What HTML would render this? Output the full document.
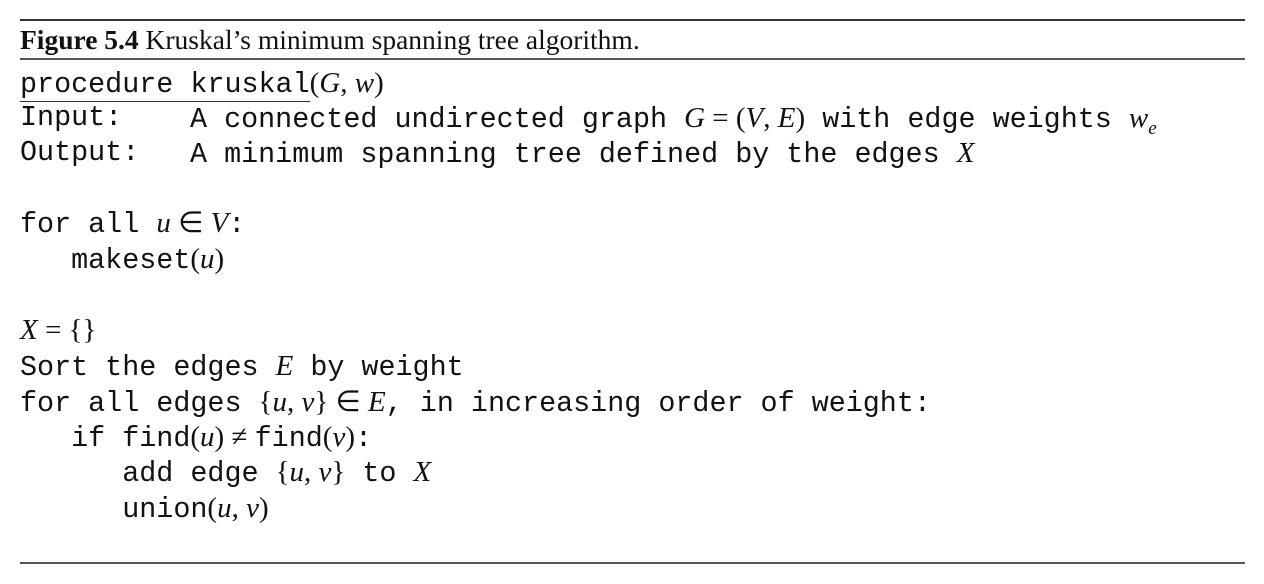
<!DOCTYPE html>
<html><head><meta charset="utf-8"><style>
body{margin:0;width:1264px;height:584px;background:#fff;position:relative;overflow:hidden;color:#111}
.r{position:absolute;left:20px;width:1225px;background:#333}
.l{position:absolute;left:20px;height:36px;line-height:36px;white-space:pre;font-family:"Liberation Mono",monospace;font-size:28.4px}
.m{font-family:"Liberation Serif",serif;font-style:italic;font-size:29px}
.n{font-family:"Liberation Serif",serif;font-size:29px}
.c{position:absolute;left:20px;top:22px;font-family:"Liberation Serif",serif;font-size:27.5px;line-height:36px}
.t{position:absolute;left:170px}
</style></head><body>
<div class="r" style="top:19px;height:2px"></div>
<div class="c"><b>Figure 5.4</b> Kruskal’s minimum spanning tree algorithm.</div>
<div class="r" style="top:58px;height:1.5px;background:#555"></div>
<div class="l" style="top:65px"><span style="border-bottom:1.5px solid #333;padding-bottom:0">procedure kruskal</span><span class="n">(</span><span class="m">G</span><span class="n">, </span><span class="m">w</span><span class="n">)</span></div>
<div class="l" style="top:100px">Input:<span class="t">A connected undirected graph <span class="m">G</span><span class="n"> = (</span><span class="m">V</span><span class="n">, </span><span class="m">E</span><span class="n">)</span> with edge weights <span class="m">w<sub style="font-size:19px">e</sub></span></span></div>
<div class="l" style="top:135px">Output:<span class="t">A minimum spanning tree defined by the edges <span class="m">X</span></span></div>
<div class="l" style="top:205px">for all <span class="m">u</span><span class="n"> ∈ </span><span class="m">V</span>:</div>
<div class="l" style="top:241px">   makeset<span class="n">(</span><span class="m">u</span><span class="n">)</span></div>
<div class="l" style="top:312px"><span class="m">X</span><span class="n"> = {}</span></div>
<div class="l" style="top:348px">Sort the edges <span class="m">E</span> by weight</div>
<div class="l" style="top:384px">for all edges <span class="n">{</span><span class="m">u</span><span class="n">, </span><span class="m">v</span><span class="n">} ∈ </span><span class="m">E</span>, in increasing order of weight:</div>
<div class="l" style="top:419px">   if find<span class="n">(</span><span class="m">u</span><span class="n">) ≠ </span>find<span class="n">(</span><span class="m">v</span><span class="n">)</span>:</div>
<div class="l" style="top:454px">      add edge <span class="n">{</span><span class="m">u</span><span class="n">, </span><span class="m">v</span><span class="n">}</span> to <span class="m">X</span></div>
<div class="l" style="top:490px">      union<span class="n">(</span><span class="m">u</span><span class="n">, </span><span class="m">v</span><span class="n">)</span></div>
<div class="r" style="top:562px;height:1.5px;background:#555"></div>
</body></html>
